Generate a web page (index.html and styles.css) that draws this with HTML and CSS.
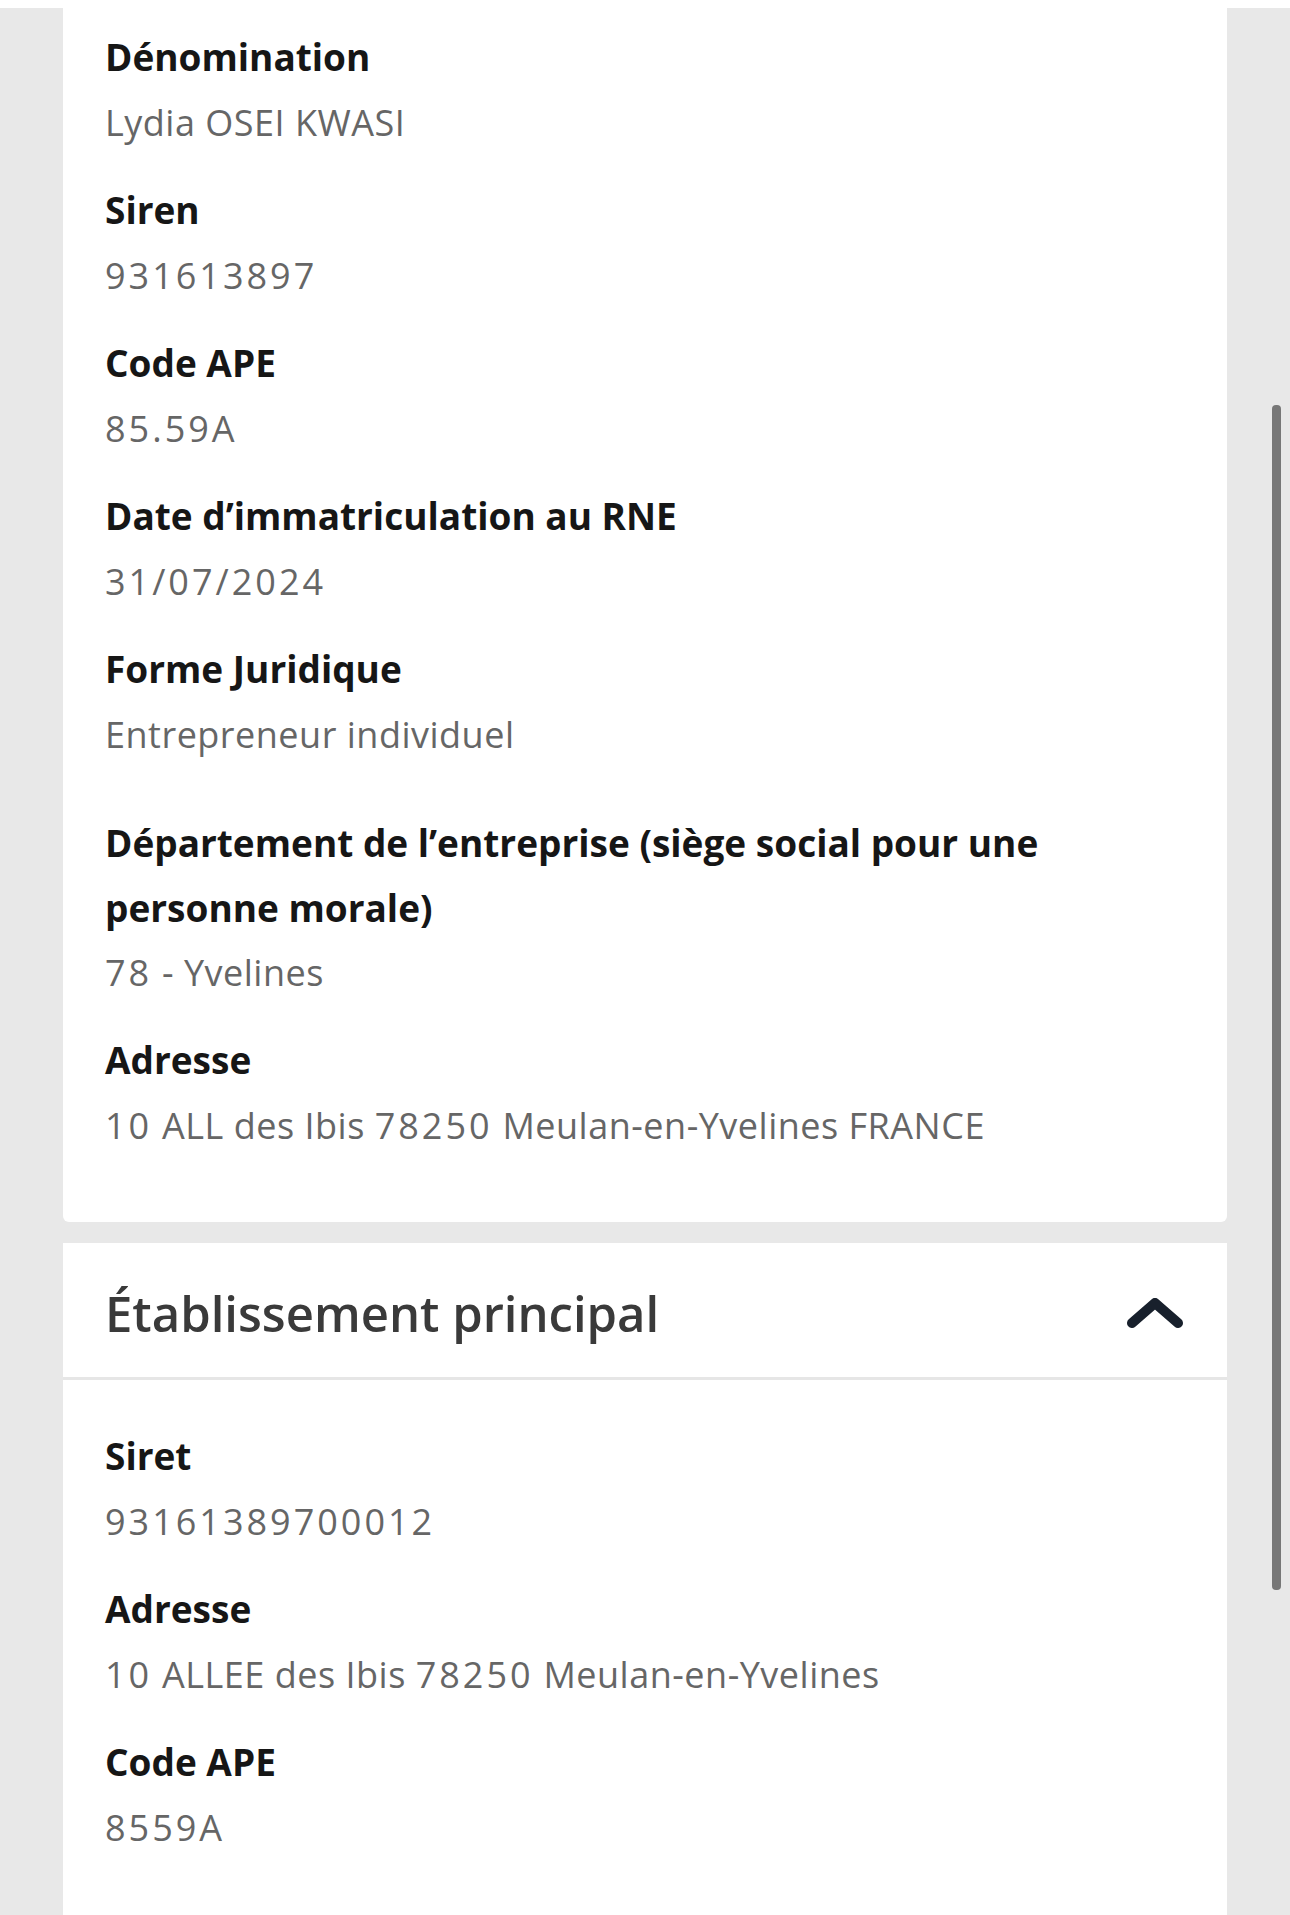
FILE: index.html
```html
<!DOCTYPE html>
<html lang="fr">
<head>
<meta charset="utf-8">
<title>Entreprise</title>
<link rel="stylesheet" href="styles.css">
</head>
<body>
<div class="screen">
  <section class="card card-top">
    <div class="field">
      <div class="label">Dénomination</div>
      <div class="value">Lydia OSEI KWASI</div>
    </div>
    <div class="field">
      <div class="label">Siren</div>
      <div class="value"><span class="num">931613897</span></div>
    </div>
    <div class="field">
      <div class="label">Code APE</div>
      <div class="value"><span class="num">85.59</span>A</div>
    </div>
    <div class="field">
      <div class="label">Date d’immatriculation au RNE</div>
      <div class="value"><span class="num">31/07/2024</span></div>
    </div>
    <div class="field">
      <div class="label">Forme Juridique</div>
      <div class="value">Entrepreneur individuel</div>
    </div>
    <div class="field field-long">
      <div class="label">Département de l’entreprise (siège social pour une personne morale)</div>
      <div class="value"><span class="num">78</span> - Yvelines</div>
    </div>
    <div class="field">
      <div class="label">Adresse</div>
      <div class="value"><span class="num">10</span> ALL des Ibis <span class="num">78250</span> Meulan-en-Yvelines FRANCE</div>
    </div>
  </section>

  <section class="card card-acc">
    <header class="acc-head">
      <h2 class="acc-title">Établissement principal</h2>
      <svg class="chevron" width="56" height="30" viewBox="0 0 56 30" aria-hidden="true">
        <polyline points="5,25 28,5 51,25" fill="none" stroke="#18202c" stroke-width="10" stroke-linecap="round" stroke-linejoin="round"/>
      </svg>
    </header>
    <div class="acc-body">
      <div class="field">
        <div class="label">Siret</div>
        <div class="value"><span class="num">93161389700012</span></div>
      </div>
      <div class="field">
        <div class="label">Adresse</div>
        <div class="value"><span class="num">10</span> ALLEE des Ibis <span class="num">78250</span> Meulan-en-Yvelines</div>
      </div>
      <div class="field">
        <div class="label">Code APE</div>
        <div class="value"><span class="num">8559</span>A</div>
      </div>
    </div>
  </section>

  <div class="scrollbar"></div>
</div>
</body>
</html>
```

FILE: styles.css
```css
html, body {
  margin: 0;
  padding: 0;
  background: #ffffff;
}

body {
  font-family: "Open Sans", "Noto Sans", "Liberation Sans", sans-serif;
}

.screen {
  position: relative;
  margin-top: 8px;
  height: 1907px;
  overflow: hidden;
  background: #e8e8e8;
  padding: 0 63px;
  display: flex;
  flex-direction: column;
  gap: 21px;
}

.card {
  background: #ffffff;
}

.card-top {
  padding: 16px 42px 63px;
  border-radius: 0 0 6px 6px;
}

.field + .field {
  margin-top: 21px;
}

.field-long {
  margin-top: 42px !important;
}

.label {
  font-size: 37px;
  font-weight: 700;
  line-height: 66px;
  color: #161616;
}

.field-long .label {
  line-height: 65px;
}

.value {
  font-size: 36px;
  font-weight: 400;
  line-height: 66px;
  color: #666666;
  letter-spacing: 0.5px;
}

.num {
  letter-spacing: 3px;
}

.card-acc {
  flex: 1;
}

.acc-head {
  height: 137px;
  box-sizing: border-box;
  border-bottom: 3px solid #e6e6e6;
  display: flex;
  align-items: center;
  justify-content: space-between;
  padding: 6px 44px 0 42px;
}

.acc-title {
  margin: 0;
  font-size: 49px;
  font-weight: 600;
  color: #3a3a3a;
}

.chevron {
  display: block;
}

.acc-body {
  padding: 43px 42px 60px;
}

.scrollbar {
  position: absolute;
  left: 1272px;
  top: 397px;
  width: 9px;
  height: 1185px;
  border-radius: 4px;
  background: #777777;
}
```
